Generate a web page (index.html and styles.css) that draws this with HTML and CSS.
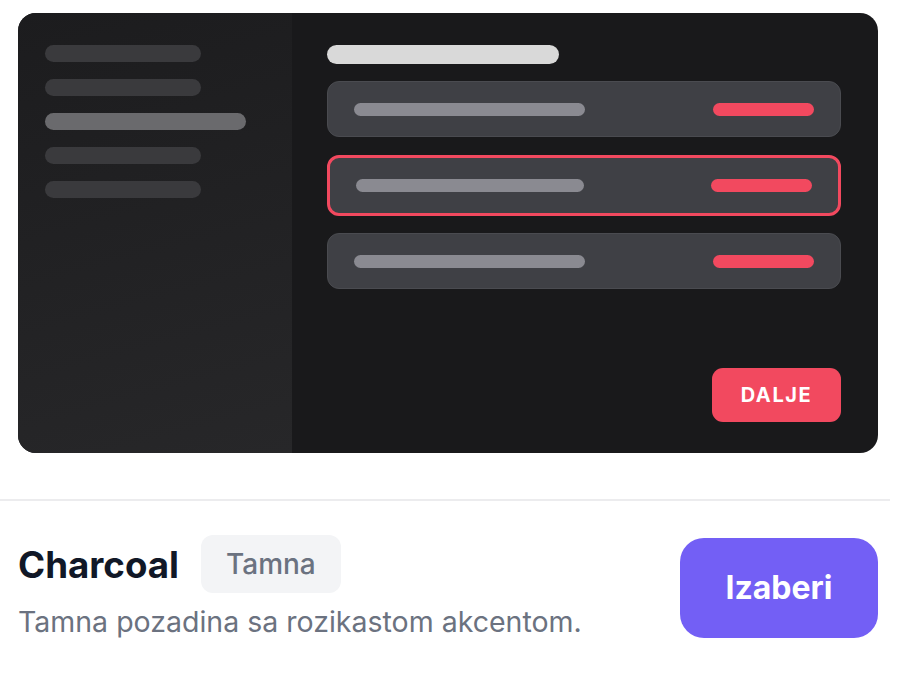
FILE: index.html
```html
<!DOCTYPE html>
<html lang="hr">
<head>
    <meta charset="UTF-8">
    <title>Tema - Charcoal</title>
    <meta name="viewport" content="width=device-width, initial-scale=1">
    <link rel="stylesheet" href="styles.css">
</head>
<body>
    <div class="preview">
        <div class="side">
            <span class="sbar"></span>
            <span class="sbar"></span>
            <span class="sbar active"></span>
            <span class="sbar"></span>
            <span class="sbar"></span>
        </div>
        <div class="main">
            <span class="title-bar"></span>
            <div class="row"><span class="gbar"></span><span class="pbar"></span></div>
            <div class="row selected"><span class="gbar"></span><span class="pbar"></span></div>
            <div class="row"><span class="gbar"></span><span class="pbar"></span></div>
            <button class="next">DALJE</button>
        </div>
    </div>

    <hr class="divider">

    <div class="footer">
        <div class="info">
            <div class="name-row">
                <h3>Charcoal</h3>
                <span class="badge">Tamna</span>
            </div>
            <p class="desc">Tamna pozadina sa rozikastom akcentom.</p>
        </div>
        <button class="choose">Izaberi</button>
    </div>
</body>
</html>
```

FILE: styles.css
```css
body { margin: 0; background: #fff; font-family: Inter, "Noto Sans", sans-serif; }

.preview { display: flex; margin: 13px 22px 0 18px; height: 440px; border-radius: 18px; background: #19191b; overflow: hidden; }
.side { width: 274px; box-sizing: border-box; padding: 32px 27px; display: flex; flex-direction: column; align-items: flex-start; gap: 17px; background: linear-gradient(165deg, #1c1c1e, #272729); }
.sbar { display: block; width: 156px; height: 17px; border-radius: 9px; background: #3a3a3d; }
.sbar.active { width: 201px; background: #6a6a6d; }

.main { flex: 1; padding: 32px 37px 31px 35px; display: flex; flex-direction: column; }
.title-bar { display: block; width: 232px; height: 19px; border-radius: 10px; background: #d9d9d9; margin-bottom: 17px; }
.row { display: flex; align-items: center; justify-content: space-between; box-sizing: border-box; height: 56px; padding: 0 26px; margin-bottom: 18px; border: 1px solid #4a4b50; border-radius: 12px; background: #3f4045; }
.row.selected { height: 61px; padding: 0 26px; border: 3px solid #f2495f; margin-bottom: 17px; }
.gbar { display: block; width: 231px; height: 13px; border-radius: 7px; background: #8a8a91; }
.pbar { display: block; width: 101px; height: 13px; border-radius: 7px; background: #f2495f; }
.row.selected .gbar { width: 228px; }

.next { margin-top: auto; align-self: flex-end; width: 129px; height: 54px; border: 0; border-radius: 11px; background: #f2495f; color: #fff; font-family: Inter, sans-serif; font-weight: 700; font-size: 20px; letter-spacing: 1.6px; }

.divider { margin: 46px 10px 0 0; border: 0; border-top: 2px solid #ececee; }

.footer { display: flex; align-items: center; justify-content: space-between; padding: 34px 22px 0 18px; }
.name-row { display: flex; align-items: center; gap: 22px; }
.name-row h3 { margin: 0; font-size: 36.7px; font-weight: 700; color: #111827; }
.badge { display: inline-block; padding: 0 25px; height: 58px; line-height: 58px; border-radius: 12px; background: #f3f4f6; color: #6b7280; font-size: 28px; font-weight: 500; }
.desc { margin: 11px 0 0; font-size: 28.5px; line-height: 36px; color: #6b7280; }

.choose { width: 198px; height: 100px; border: 0; border-radius: 24px; background: #735ff5; color: #fff; font-family: Inter, sans-serif; font-size: 32px; font-weight: 700; }
```
